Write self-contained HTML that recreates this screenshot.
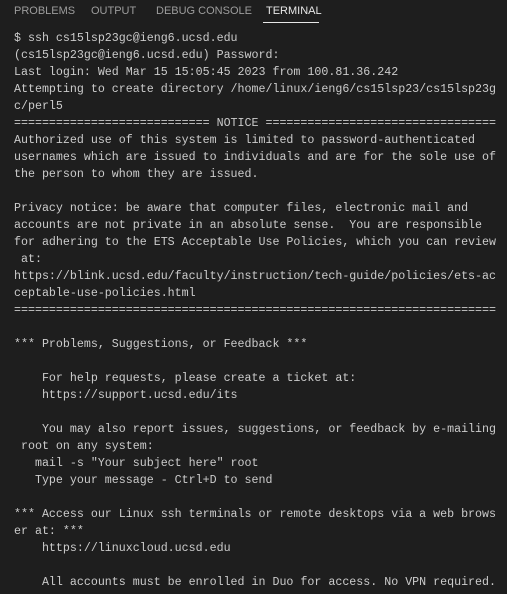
<!DOCTYPE html>
<html><head><style>
body{margin:0;width:507px;height:594px;background:#1e1e1e;overflow:hidden;}
.tabs{position:absolute;top:0;left:0;height:26px;width:507px;font-family:"Liberation Sans",sans-serif;font-size:11px;color:#9d9d9d;}
.tabs span{position:absolute;top:5px;letter-spacing:0px;}
.ul{position:absolute;left:263px;top:22px;width:56px;height:1px;background:#e7e7e7;}
pre{position:absolute;left:14px;top:30px;margin:0;font-family:"Liberation Mono",monospace;font-size:11.65px;line-height:17px;color:#cccccc;}
</style></head><body>
<div class="tabs">
<span style="left:14px">PROBLEMS</span>
<span style="left:91px">OUTPUT</span>
<span style="left:156px">DEBUG CONSOLE</span>
<span style="left:266px;color:#e7e7e7">TERMINAL</span>
<div class="ul"></div>
</div>
<pre>$ ssh cs15lsp23gc@ieng6.ucsd.edu
(cs15lsp23gc@ieng6.ucsd.edu) Password:
Last login: Wed Mar 15 15:05:45 2023 from 100.81.36.242
Attempting to create directory /home/linux/ieng6/cs15lsp23/cs15lsp23g
c/perl5
============================ NOTICE =================================
Authorized use of this system is limited to password-authenticated
usernames which are issued to individuals and are for the sole use of
the person to whom they are issued.

Privacy notice: be aware that computer files, electronic mail and
accounts are not private in an absolute sense.  You are responsible
for adhering to the ETS Acceptable Use Policies, which you can review
 at:
https://blink.ucsd.edu/faculty/instruction/tech-guide/policies/ets-ac
ceptable-use-policies.html
=====================================================================

*** Problems, Suggestions, or Feedback ***

    For help requests, please create a ticket at:
    https://support.ucsd.edu/its

    You may also report issues, suggestions, or feedback by e-mailing
 root on any system:
   mail -s "Your subject here" root
   Type your message - Ctrl+D to send

*** Access our Linux ssh terminals or remote desktops via a web brows
er at: ***
    https://linuxcloud.ucsd.edu

    All accounts must be enrolled in Duo for access. No VPN required.</pre>
</body></html>
